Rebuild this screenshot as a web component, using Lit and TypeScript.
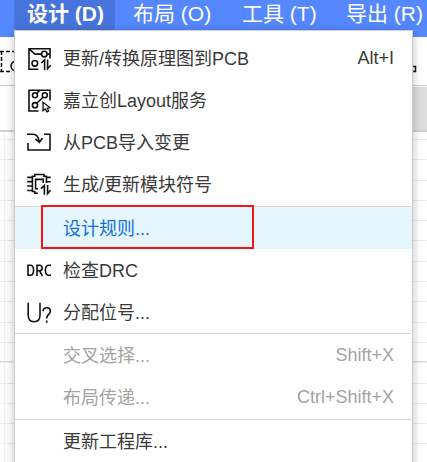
import { LitElement, html, css, svg, nothing } from "lit";
import { customElement, property } from "lit/decorators.js";
import { classMap } from "lit/directives/class-map.js";

const icons: Record<string, unknown> = {
  update: svg`<path d="M23 12.5V2.8H2V23.3H11.3M2.3 3.2L8 8.1H14.4M20.2 8.1H23"/><circle cx="17.3" cy="8.1" r="2.8"/><circle cx="7.8" cy="17.3" r="2.8"/><path d="M14.2 17L17.6 13.9V24M20.6 13.5V22.7L23.7 19.3"/>`,
  layout: svg`<path d="M23 12.5V2.2H2V23H11.5M9.9 5.2L12.7 2.4M9.8 15.3L16 9.2"/><circle cx="8" cy="7.2" r="2.5"/><circle cx="17.8" cy="7.3" r="2.5"/><circle cx="8" cy="17.2" r="2.6"/><path class="thin" d="M16 14.2V22.6L18.3 20.9L19.9 23.9L21.7 23L20.3 20.2L23 19.6Z"/>`,
  import: svg`<path d="M0 4.2H5.8C10 4.2 11.8 7 12.2 12M8.3 8.8L12.4 12.4L15.4 8M17 4.2H23V20H1V13"/>`,
  module: svg`<path d="M11 21.3H7.8V19.5H5.4V4.2H7.8V2.5H17V4.2H19.4V11M.2 5.4H5M.2 9.6H5M.2 14H5M.2 18.5H5M19.6 5.4H23.7M19.6 9.8H23.7M11 16.7H8.6V7.4H16.2V11M14 16.6L17.4 13.4V22.8M20.6 13V21.6L23.5 18.2"/>`,
  drc: svg`<path d="M1 7.2V17.2H3.2C5.4 17.2 6.6 15.6 6.6 12.2C6.6 8.8 5.4 7.2 3.2 7.2ZM10 18V7.2H12.2C14.2 7.2 15.2 8.2 15.2 9.9C15.2 11.6 14.2 12.7 12.2 12.7H10.2M12.6 12.8L15.4 18M24 7.2H22C19.4 7.2 18.4 8.8 18.4 12.2C18.4 15.6 19.4 17.2 22 17.2H24"/>`,
  designator: svg`<path d="M1.2 2.8V15C1.2 19.6 3.4 21.7 7.1 21.7C10.8 21.7 13 19.6 13 15V2.8"/><path d="M16 11.2C16.2 8.9 17.6 7.8 19.7 7.8C21.8 7.8 23.3 9.2 23.3 11.2C23.3 14.5 19.7 14.3 19.7 18.4M19.7 20.6V22.8"/>`,
};

@customElement("menu-row")
class MenuRow extends LitElement {
  @property() label = "";
  @property() shortcut = "";
  @property() icon = "";
  @property() state = "";
  static styles = css`
    :host { display: block; }
    .row { display: flex; align-items: center; height: 42px; padding: 0 18px 0 12px; color: #3a3a3a; }
    .icon { width: 24px; height: 24px; flex: none; margin-right: 12px; }
    svg { display: block; width: 24px; height: 24px; overflow: visible; fill: none; stroke: #111; stroke-width: 1.6; }
    .thin { stroke-width: 1.3; fill: #fff; }
    .label { flex: 1; white-space: nowrap; padding-bottom: 2px; }
    .disabled { color: #a3a3a3; }
    .active { background: #e5f6ff; color: #1470d8; }
  `;
  render() {
    return html`<div class=${classMap({ row: true, active: this.state === "active", disabled: this.state === "disabled" })}>
      <span class="icon">${this.icon ? html`<svg viewBox="0 0 24 24">${icons[this.icon]}</svg>` : nothing}</span>
      <span class="label">${this.label}</span>
      <span>${this.shortcut}</span>
    </div>`;
  }
}

@customElement("app-root")
class AppRoot extends LitElement {
  static styles = css`
    :host { display: block; position: relative; width: 427px; height: 462px; overflow: hidden; background: #fff;
      font-family: "Liberation Sans", "Noto Sans CJK SC", sans-serif; font-size: 18px; }
    .bar { display: flex; height: 37px; background: #5588ff; color: #fff; font-size: 21px; padding-left: 14px; }
    .tab { box-sizing: border-box; height: 30px; line-height: 27px; white-space: nowrap; flex: none; }
    .design { width: 101px; padding-left: 13px; background: #4774dc; font-weight: bold; border-radius: 0 0 4px 4px; }
    .place { width: 109px; padding-left: 18px; }
    .tool { width: 105px; padding-left: 18px; }
    .export { padding-left: 17px; }
    .tools { display: flex; justify-content: space-between; height: 48px; border-bottom: 1px solid #ccc; }
    .tools svg { display: block; fill: none; stroke: #111; stroke-width: 1.5; }
    .header { display: flex; justify-content: flex-end; height: 43px; margin-top: 1px; border-bottom: 2px solid #d2d2d2; }
    .gray { width: 16px; background: #ddd; }
    .canvas { height: 330px; background-image:
        linear-gradient(#dedede, #dedede),
        linear-gradient(90deg, #f0f0f0 1px, transparent 1px),
        repeating-linear-gradient(#ececec 0 1px, transparent 1px 20.3px);
      background-size: 100% 1px, 100% 100%, 100% 100%; background-position: 0 229px, 4px 0, 0 7px;
      background-repeat: no-repeat; }
    .menu { position: absolute; left: 14px; top: 30px; width: 397px; height: 440px; padding-top: 6px; background: #fff;
      border: 1px solid #ccc; box-shadow: 0 2px 9px rgba(0,0,0,.25); }
    .sep { height: 1px; margin-right: 1px; background: #d5d5d5; }
    .gap { margin-top: 1px; }
    .mark { position: absolute; left: 41px; top: 205px; width: 209px; height: 40px; border: 2px solid #fa1414; }
  `;
  render() {
    return html`
      <div class="bar">
        <div class="tab design">设计 (D)</div>
        <div class="tab place">布局 (O)</div>
        <div class="tab tool">工具 (T)</div>
        <div class="tab export">导出 (R)</div>
      </div>
      <div class="tools">
        <svg width="18" height="48"><path stroke-dasharray="4 2" d="M0 14.5H18M0 34.5H11M1.5 14V35"/><circle cx="16" cy="29" r="5"/></svg>
        <svg width="16" height="48"><path d="M0 29.5H4.5V34.5H0"/></svg>
      </div>
      <div class="header"><div class="gray"></div></div>
      <div class="canvas"></div>
      <div class="menu">
        <menu-row icon="update" label="更新/转换原理图到PCB" shortcut="Alt+I"></menu-row>
        <menu-row icon="layout" label="嘉立创Layout服务"></menu-row>
        <menu-row icon="import" label="从PCB导入变更"></menu-row>
        <menu-row icon="module" label="生成/更新模块符号"></menu-row>
        <div class="sep gap"></div>
        <menu-row state="active" label="设计规则..."></menu-row>
        <menu-row icon="drc" label="检查DRC"></menu-row>
        <menu-row icon="designator" label="分配位号..."></menu-row>
        <div class="sep"></div>
        <menu-row state="disabled" label="交叉选择..." shortcut="Shift+X"></menu-row>
        <menu-row state="disabled" label="布局传递..." shortcut="Ctrl+Shift+X"></menu-row>
        <div class="sep gap"></div>
        <menu-row label="更新工程库..."></menu-row>
      </div>
      <div class="mark"></div>
    `;
  }
}
